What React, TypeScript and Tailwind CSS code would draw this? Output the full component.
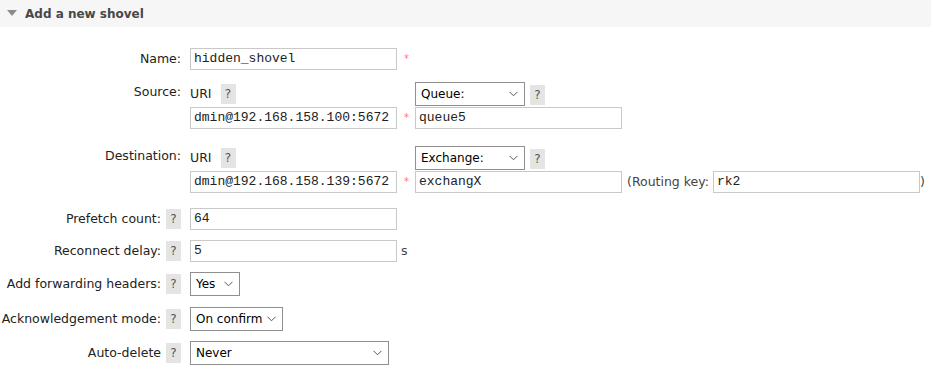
import type { ReactNode } from 'react';

const sans = 'font-[family-name:"DejaVu_Sans",Verdana,sans-serif]';
const mono = 'font-[family-name:"Liberation_Mono","Courier_New",monospace]';

function Help() {
  return (
    <span className="inline-flex h-[20px] w-[15px] items-center justify-center bg-[#e4e4e4] text-[12px] text-[#555]">
      ?
    </span>
  );
}

function Star() {
  return <span className="inline-block w-[18px] pl-[7px] text-[10px] leading-none text-[#f77]">*</span>;
}

function TextInput({ value, w = 'w-[207px]' }: { value: string; w?: string }) {
  return (
    <div
      className={`flex h-[22px] ${w} items-center border border-[#c9c9c9] bg-white pl-[3px] text-[13px] text-[#222] ${mono}`}
    >
      {value}
    </div>
  );
}

function Select({ value, w }: { value: string; w: string }) {
  return (
    <div
      className={`flex h-[24px] ${w} items-center justify-between border border-[#8f8f8f] bg-white pl-[5px] pr-[6px] text-[12px] text-black`}
    >
      <span className="whitespace-nowrap">{value}</span>
      <svg width="9" height="6" viewBox="0 0 9 6" fill="none" stroke="#555" strokeWidth="1" className="shrink-0">
        <path d="M0.5 0.8 L4.5 4.8 L8.5 0.8" />
      </svg>
    </div>
  );
}

function Row({ label, help, top, children, align = 'center' }: { label: string; help?: boolean; top: string; children: ReactNode; align?: 'center' | 'start' }) {
  return (
    <div className={`flex ${top} ${align === 'center' ? 'items-center' : 'items-start'}`}>
      <div className={`flex w-[190px] shrink-0 items-center justify-end gap-[5px] pr-[9px] text-[12.5px] text-[#222] ${align === 'start' ? 'pt-[1px]' : ''}`}>
        <span>{label}</span>
        {help && <Help />}
      </div>
      {children}
    </div>
  );
}

function UriBlock({ uri, kind, kindW, target, extra }: { uri: string; kind: string; kindW: string; target: string; extra?: ReactNode }) {
  return (
    <div className="flex flex-col gap-[1px]">
      <div className="flex h-[24px] items-center">
        <div className="flex w-[225px] items-center gap-[9px] text-[12.5px] text-[#222]">
          <span>URI</span>
          <Help />
        </div>
        <Select value={kind} w={kindW} />
        <span className="ml-[5px]">
          <Help />
        </span>
      </div>
      <div className="flex items-center">
        <TextInput value={uri} />
        <Star />
        <TextInput value={target} />
        {extra}
      </div>
    </div>
  );
}

export default function App() {
  return (
    <div className={`h-[371px] w-[931px] overflow-hidden bg-white ${sans}`}>
      <div className="flex h-[27px] items-center bg-[#f6f6f6] pl-[7px]">
        <svg width="10" height="7" viewBox="0 0 10 7">
          <path d="M0 0 H10 L5 6 Z" fill="#8c8c8c" />
        </svg>
        <span className="ml-[8px] text-[12px] font-bold text-[#484848]">Add a new shovel</span>
      </div>

      <Row label="Name:" top="mt-[21px]">
        <TextInput value="hidden_shovel" />
        <Star />
      </Row>

      <Row label="Source:" top="mt-[12px]" align="start">
        <UriBlock uri="dmin@192.168.158.100:5672" kind="Queue:" kindW="w-[110px]" target="queue5" />
      </Row>

      <Row label="Destination:" top="mt-[17px]" align="start">
        <UriBlock
          uri="dmin@192.168.158.139:5672"
          kind="Exchange:"
          kindW="w-[110px]"
          target="exchangX"
          extra={
            <>
              <span className="ml-[5px] mr-[4px] text-[12.5px] text-[#444]">(Routing key:</span>
              <TextInput value="rk2" />
              <span className="text-[12.5px] text-[#444]">)</span>
            </>
          }
        />
      </Row>

      <Row label="Prefetch count:" help top="mt-[15px]">
        <TextInput value="64" />
      </Row>

      <Row label="Reconnect delay:" help top="mt-[10px]">
        <TextInput value="5" />
        <span className="ml-[4px] text-[12.5px] text-[#444]">s</span>
      </Row>

      <Row label="Add forwarding headers:" help top="mt-[10px]">
        <Select value="Yes" w="w-[50px]" />
      </Row>

      <Row label="Acknowledgement mode:" help top="mt-[11px]">
        <Select value="On confirm" w="w-[93px]" />
      </Row>

      <Row label="Auto-delete" help top="mt-[10px]">
        <Select value="Never" w="w-[199px]" />
      </Row>
    </div>
  );
}
